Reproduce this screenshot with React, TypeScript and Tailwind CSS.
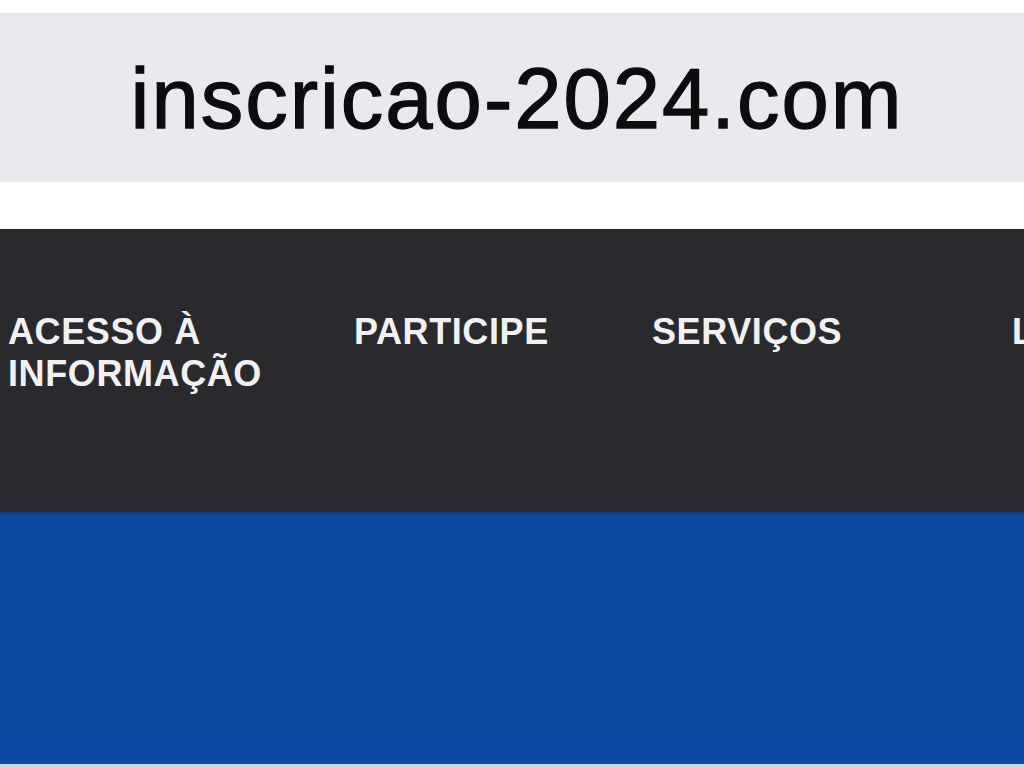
const navItems = [
  { label: ['ACESSO À', 'INFORMAÇÃO'], width: 'w-[346px]' },
  { label: ['PARTICIPE'], width: 'w-[298px]' },
  { label: ['SERVIÇOS'], width: 'w-[360px]' },
  { label: ['LEGISLAÇÃO'], width: 'w-[300px]' },
];

export default function App() {
  return (
    <div className="w-[1024px] h-[768px] overflow-hidden bg-white flex flex-col font-['Liberation_Sans',Arial,sans-serif]">
      {/* address bar */}
      <div className="h-[13px] bg-white" />
      <div className="h-[169px] bg-[#e9e9ee] flex items-center justify-center pl-[10px]">
        <span className="text-[85px] leading-none tracking-[2px] text-[#0c0c0e] mt-[2px] [-webkit-text-stroke:1.3px_#0c0c0e]">
          inscricao-2024.com
        </span>
      </div>
      <div className="h-[47px] bg-white" />

      {/* nav */}
      <nav className="h-[283px] bg-[#2a292e] flex pt-[82px] pl-[8px] overflow-hidden">
        {navItems.map((item) => (
          <div
            key={item.label.join(' ')}
            className={`${item.width} shrink-0 text-[36px] leading-[42px] font-bold tracking-[0.6px] text-[#f1f1f3] whitespace-nowrap`}
          >
            {item.label.map((line) => (
              <div key={line}>{line}</div>
            ))}
          </div>
        ))}
      </nav>

      {/* hero */}
      <div className="h-[252px] bg-[#0a4ba2] border-t-[3px] border-[#1b3a72]" />
      <div className="flex-1 bg-[#c9d9ee]" />
    </div>
  );
}
